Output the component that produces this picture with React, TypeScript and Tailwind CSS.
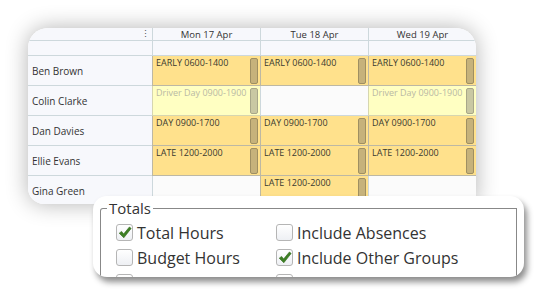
import React from 'react';

type Shift = { label: string; kind: 'shift' | 'driver' } | null;

const rows: { name: string; shifts: Shift[] }[] = [
  {
    name: 'Ben Brown',
    shifts: [
      { label: 'EARLY 0600-1400', kind: 'shift' },
      { label: 'EARLY 0600-1400', kind: 'shift' },
      { label: 'EARLY 0600-1400', kind: 'shift' },
    ],
  },
  {
    name: 'Colin Clarke',
    shifts: [
      { label: 'Driver Day 0900-1900', kind: 'driver' },
      null,
      { label: 'Driver Day 0900-1900', kind: 'driver' },
    ],
  },
  {
    name: 'Dan Davies',
    shifts: [
      { label: 'DAY 0900-1700', kind: 'shift' },
      { label: 'DAY 0900-1700', kind: 'shift' },
      { label: 'DAY 0900-1700', kind: 'shift' },
    ],
  },
  {
    name: 'Ellie Evans',
    shifts: [
      { label: 'LATE 1200-2000', kind: 'shift' },
      { label: 'LATE 1200-2000', kind: 'shift' },
      { label: 'LATE 1200-2000', kind: 'shift' },
    ],
  },
  {
    name: 'Gina Green',
    shifts: [null, { label: 'LATE 1200-2000', kind: 'shift' }, null],
  },
];

const days = ['Mon 17 Apr', 'Tue 18 Apr', 'Wed 19 Apr'];

const ShiftCell: React.FC<{ shift: Shift }> = ({ shift }) => {
  if (!shift) {
    return <div className="h-[30px] border-l border-b border-[#cdd8dc] bg-[#fbfbfb]" />;
  }
  const driver = shift.kind === 'driver';
  return (
    <div
      className={`h-[30px] border-l border-b flex justify-between pl-[3px] pr-[2px] pt-[1px] ${
        driver ? 'bg-[#ffffc2] border-[#d6d6b0]' : 'bg-[#ffe18c] border-[#bdb8a4]'
      }`}
    >
      <span className={`text-[9px] leading-[12px] ${driver ? 'text-[#b9b9a4]' : 'text-[#3a3a30]'}`}>
        {shift.label}
      </span>
      <div
        className={`w-[8px] h-[26px] mt-[1px] rounded-[2px] border ${
          driver ? 'bg-[#c9c8a3] border-[#a8a78a]' : 'bg-[#c6b27b] border-[#9f8f62]'
        }`}
      />
    </div>
  );
};

const Check: React.FC<{ checked?: boolean; label: string }> = ({ checked, label }) => (
  <div className="flex items-center gap-[4px] h-[25px]">
    <div className="w-[17px] h-[17px] rounded-[3px] border border-[#b5b5b5] bg-gradient-to-b from-[#ffffff] to-[#eef0f4] flex items-center justify-center">
      {checked && (
        <svg width="14" height="13" viewBox="0 0 14 13">
          <path d="M1.2 7.2 L3.6 5.4 L5.6 8 L11.4 1 L13.2 2.4 L5.8 11.8 Z" fill="#3d7f24" stroke="#2f6a1a" strokeWidth="0.6" strokeLinejoin="round" />
        </svg>
      )}
    </div>
    <span className="text-[16px] text-[#333] leading-none">{label}</span>
  </div>
);

const App: React.FC = () => {
  return (
    <div className="w-[534px] h-[292px] bg-white overflow-hidden font-['Open_Sans',sans-serif]">
      <div className="ml-[28px] mt-[28px] w-[448px] h-[176px] rounded-t-[20px] rounded-bl-[16px] rounded-br-[4px] overflow-hidden bg-white shadow-[0_0_22px_rgba(0,0,0,0.3)] grid grid-cols-[124px_108px_108px_108px]">
        <div className="h-[13px] border-b border-[#cdd8dc] bg-[#f7f8fc] flex justify-end pr-[2px]">
          <span className="text-[9px] leading-[11px] text-[#555]">⋮</span>
        </div>
        {days.map((d) => (
          <div key={d} className="h-[13px] border-l border-b border-[#cdd8dc] bg-[#f7f8fc] text-center text-[9.5px] leading-[13px] text-[#333]">
            {d}
          </div>
        ))}
        <div className="h-[15px] border-b border-[#cdd8dc] bg-[#f7f8fc]" />
        {days.map((d) => (
          <div key={d + 'b'} className="h-[15px] border-l border-b border-[#cdd8dc] bg-[#f7f8fc]" />
        ))}
        {rows.map((r) => (
          <React.Fragment key={r.name}>
            <div className="h-[30px] border-b border-[#cdd8dc] bg-[#f7f8fc] flex items-center pl-[4px] pt-[1px] text-[10px] text-[#333]">
              {r.name}
            </div>
            {r.shifts.map((s, i) => (
              <ShiftCell key={i} shift={s} />
            ))}
          </React.Fragment>
        ))}
      </div>
      <div className="relative ml-[93px] -mt-[8px] w-[431px] h-[81px] rounded-[14px] bg-white overflow-hidden shadow-[3px_5px_6px_rgba(0,0,0,0.45)]">
        <fieldset className="mx-[7px] mt-[5px] border-t border-l border-r border-[#888] rounded-tl-[3px] pl-[15px] h-[100px]">
          <legend className="ml-[-9px] px-[2px] text-[15px] leading-[14px] text-[#333]">Totals</legend>
          <div className="grid grid-cols-[160px_1fr] mt-[5px]">
            <Check checked label="Total Hours" />
            <Check label="Include Absences" />
            <Check label="Budget Hours" />
            <Check checked label="Include Other Groups" />
            <Check label="" />
            <Check label="" />
          </div>
        </fieldset>
      </div>
    </div>
  );
};

export default App;
